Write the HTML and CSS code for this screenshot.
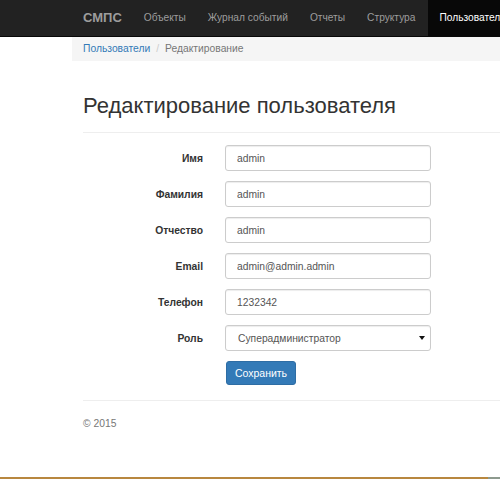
FILE: index.html
```html
<!DOCTYPE html>
<html lang="ru">
<head>
<meta charset="utf-8">
<title>Редактирование пользователя</title>
<link rel="stylesheet" href="styles.css">
</head>
<body>
<div class="page">
  <nav class="navbar">
    <div class="nav-inner">
      <a class="brand" href="#">СМПС</a>
      <ul class="nav">
        <li><a href="#">Объекты</a></li>
        <li><a href="#">Журнал событий</a></li>
        <li><a href="#">Отчеты</a></li>
        <li><a href="#">Структура</a></li>
        <li class="active"><a href="#">Пользователи</a></li>
      </ul>
    </div>
  </nav>
  <div class="container">
    <ol class="breadcrumb">
      <li><a href="#">Пользователи</a></li>
      <li class="sep">/</li>
      <li class="current">Редактирование</li>
    </ol>
    <div class="content">
      <h1 class="title">Редактирование пользователя</h1>
      <form class="form">
        <div class="row"><label class="label">Имя</label><input class="control" type="text" value="admin"></div>
        <div class="row"><label class="label">Фамилия</label><input class="control" type="text" value="admin"></div>
        <div class="row"><label class="label">Отчество</label><input class="control" type="text" value="admin"></div>
        <div class="row"><label class="label">Email</label><input class="control" type="text" value="admin@admin.admin"></div>
        <div class="row"><label class="label">Телефон</label><input class="control" type="text" value="1232342"></div>
        <div class="row"><label class="label">Роль</label>
          <div class="select-wrap"><select class="control select"><option>Суперадминистратор</option></select></div>
        </div>
        <div class="row row-btn"><span class="label"></span><button class="btn" type="button">Сохранить</button></div>
      </form>
      <footer class="footer">© 2015</footer>
    </div>
  </div>
  <div class="bottom-strip"></div>
</div>
</body>
</html>
```

FILE: styles.css
```css
* { box-sizing: border-box; }
html, body { margin: 0; padding: 0; background: #fff; }
body {
  font-family: "Liberation Sans", Arial, sans-serif;
  font-size: 10.3px;
  color: #333;
  overflow: hidden;
}
.page {
  min-height: 479px;
  display: flex;
  flex-direction: column;
}
.navbar {
  background: #222;
  border-bottom: 1px solid #080808;
  height: 37px;
}
.nav-inner {
  display: flex;
  padding-left: 72px;
  height: 36px;
  white-space: nowrap;
}
.brand {
  color: #9d9d9d;
  font-size: 13px;
  font-weight: bold;
  text-decoration: none;
  padding: 0 11px;
  line-height: 36px;
}
.nav {
  list-style: none;
  margin: 0;
  padding: 0;
  display: flex;
  font-size: 10.2px;
}
.nav li a {
  display: block;
  padding: 0 11px;
  line-height: 36px;
  color: #9d9d9d;
  text-decoration: none;
}
.nav li.active a {
  background: #080808;
  color: #fff;
  margin-left: 2px;
}
.container {
  margin-left: 72px;
  flex: 1;
}
.breadcrumb {
  list-style: none;
  margin: 0;
  padding: 0 11px;
  height: 24px;
  line-height: 24px;
  background: #f5f5f5;
  display: flex;
}
.breadcrumb a { color: #337ab7; text-decoration: none; }
.breadcrumb .sep { color: #ccc; padding: 0 6px; }
.breadcrumb .current { color: #777; }
.content { padding-left: 11px; }
.title {
  font-weight: normal;
  font-size: 22px;
  line-height: 26px;
  margin: 32px 0 0;
  padding-bottom: 13px;
  border-bottom: 1px solid #eee;
}
.form { padding-top: 12px; }
.row {
  display: flex;
  align-items: center;
  margin-bottom: 10px;
}
.row-btn { margin-top: 3px; }
.label {
  width: 142px;
  text-align: right;
  font-weight: bold;
  color: #333;
  padding-right: 22px;
  flex: none;
}
.control {
  width: 206px;
  height: 26px;
  border: 1px solid #ccc;
  border-radius: 3px;
  padding: 0 11px;
  font-family: inherit;
  font-size: 10.3px;
  color: #555;
  background: #fff;
  box-shadow: inset 0 1px 1px rgba(0,0,0,.075);
}
.select-wrap { position: relative; }
.select {
  -webkit-appearance: none;
  appearance: none;
  padding-left: 12px;
}
.select-wrap::after {
  content: "";
  position: absolute;
  right: 6px;
  top: 11px;
  border-left: 3px solid transparent;
  border-right: 3px solid transparent;
  border-top: 4px solid #111;
}
.btn {
  height: 24px;
  width: 70px;
  background: #337ab7;
  border: 1px solid #2e6da4;
  border-radius: 3px;
  color: #fff;
  font-family: inherit;
  font-size: 10.5px;
  padding: 0;
  margin-left: 1px;
}
.footer {
  margin-top: 15px;
  border-top: 1px solid #eee;
  padding-top: 17px;
  color: #777;
}
.bottom-strip {
  height: 2px;
  background: linear-gradient(to right, #b8873f 0, #b8873f 488px, #8d9a8e 488px);
}
```
